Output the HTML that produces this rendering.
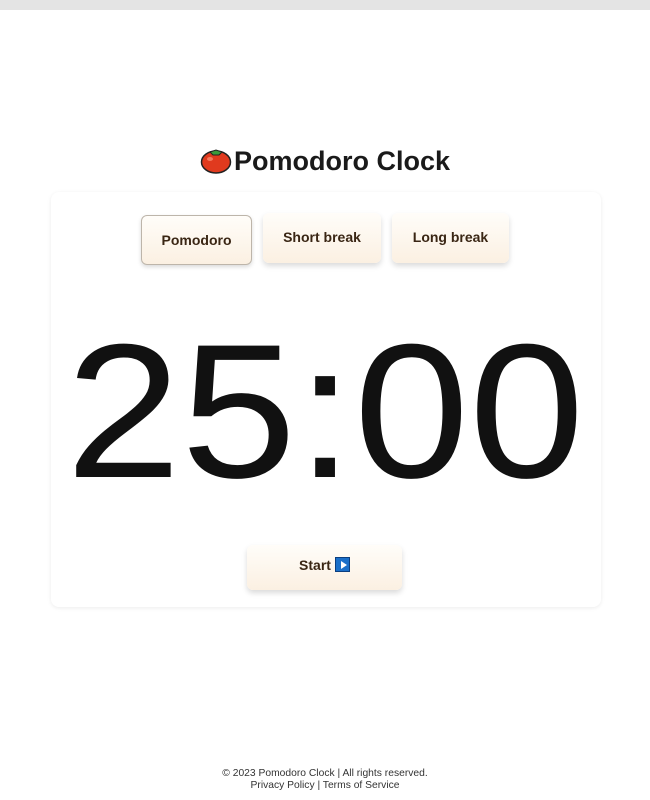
<!DOCTYPE html>
<html><head><meta charset="utf-8"><style>
*{margin:0;padding:0;box-sizing:border-box}
body{width:650px;height:800px;background:#fff;font-family:"Liberation Sans",Arial,sans-serif;position:relative;overflow:hidden}
.top{position:absolute;left:0;top:0;width:650px;height:10px;background:#e4e4e4}
h1{position:absolute;left:0;width:650px;top:146px;text-align:center;font-size:27px;font-weight:bold;color:#1a1a1a}
.card{position:absolute;left:51px;top:192px;width:550px;height:415px;border-radius:8px;box-shadow:0 1px 4px rgba(0,0,0,.08)}
.btn{position:absolute;background:linear-gradient(#fffdf9,#fbf0e2);border-radius:6px;box-shadow:0 3px 6px rgba(0,0,0,.15);font-size:14px;font-weight:bold;color:#3a2614;text-align:center}
.act{border:1px solid #bdb5aa;box-shadow:0 2px 4px rgba(0,0,0,.15)}
.time{position:absolute;left:0;width:650px;top:297px;text-align:center;font-size:191px;line-height:230px;color:#111;transform:scaleX(1.085);transform-origin:324px 50%}
.foot{position:absolute;left:0;width:650px;top:768px;text-align:center;font-size:10.3px;line-height:12px;color:#333}
.play{display:inline-block;width:15px;height:15px;background:#1a6fc9;border:1px solid #0b3f80;vertical-align:-2px;margin-left:4px;position:relative}
.play:after{content:"";position:absolute;left:5px;top:3px;border-left:6px solid #fff;border-top:4px solid transparent;border-bottom:4px solid transparent}
</style></head><body>
<div class="top"></div>
<h1><svg width="32" height="28" viewBox="0 0 32 28" style="vertical-align:-4px;margin-right:2px"><ellipse cx="16" cy="16" rx="14.5" ry="11" fill="#e03a1e" stroke="#222" stroke-width="1.5"/><ellipse cx="10" cy="13" rx="3" ry="2" fill="#f47a5e"/><path d="M10 6 L16 4 L22 6 L19 9 L13 9 Z" fill="#3a9a3a" stroke="#222" stroke-width="1"/></svg>Pomodoro Clock</h1>
<div class="card"></div>
<div class="btn act" style="left:141px;top:215px;width:111px;height:50px;line-height:48px">Pomodoro</div>
<div class="btn" style="left:263px;top:213px;width:118px;height:50px;line-height:48px">Short break</div>
<div class="btn" style="left:392px;top:213px;width:117px;height:50px;line-height:48px">Long break</div>
<div class="time">25:00</div>
<div class="btn" style="left:247px;top:545px;width:155px;height:45px;line-height:40px">Start<span class="play"></span></div>
<div class="foot">© 2023 Pomodoro Clock | All rights reserved.<br>Privacy Policy | Terms of Service</div>
</body></html>
